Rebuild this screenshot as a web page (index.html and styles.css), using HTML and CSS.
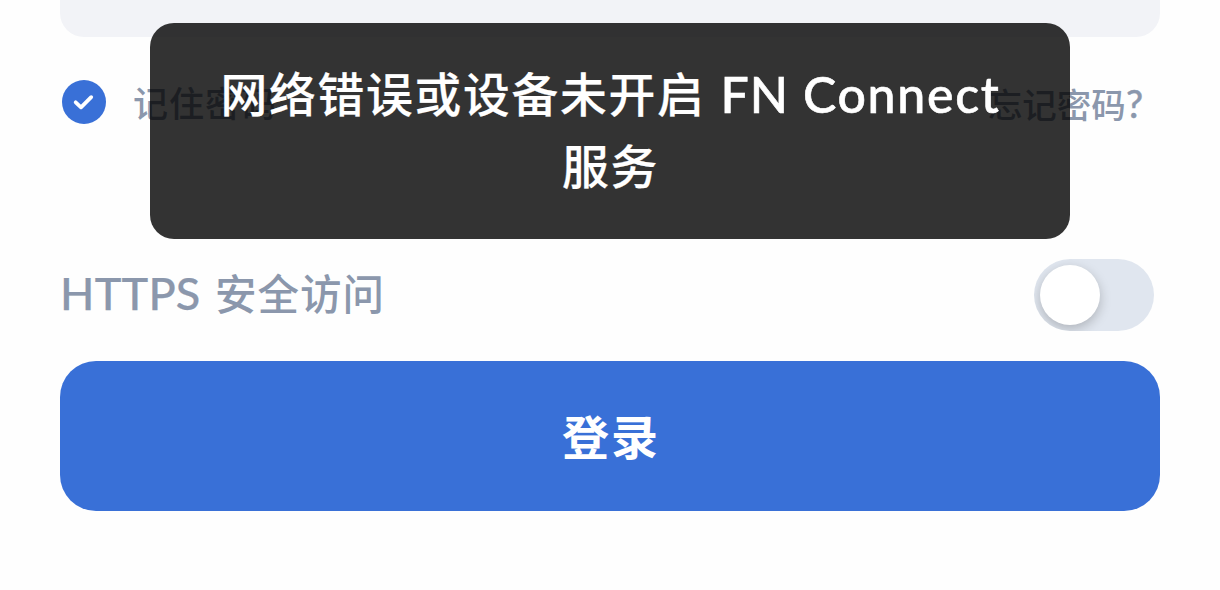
FILE: index.html
```html
<!DOCTYPE html>
<html lang="zh-CN">
<head>
<meta charset="utf-8">
<title>登录</title>
<link rel="stylesheet" href="styles.css">
</head>
<body>
<main class="login">
  <div class="field"></div>
  <div class="options">
    <label class="remember">
      <svg class="check" viewBox="0 0 44 44"><circle cx="22" cy="22" r="22"/><path d="M13.7 22.3 19 27.3 29.2 17.2"/></svg>
      <span class="remember-text">记住密码</span>
    </label>
    <a class="forgot">忘记密码<span class="mark">?</span></a>
  </div>
  <div class="https">
    <span class="https-text"><span class="latin">HTTPS</span><span class="https-cjk">安全访问</span></span>
    <span class="switch"><span class="knob"></span></span>
  </div>
  <button class="submit">登录</button>
</main>
<div class="toast">
  <div class="toast-line">网络错误或设备未开启<span class="toast-fn">FN</span><span class="toast-connect">Connect</span></div>
  <div class="toast-line">服务</div>
</div>
</body>
</html>
```
FILE: styles.css
```css
* { box-sizing: border-box; }
body {
  margin: 0;
  height: 590px;
  overflow: hidden;
  background: #fefefe;
  font-family: "Noto Sans CJK SC", "Noto Sans", sans-serif;
  font-weight: 500;
}
.login { padding: 0 60px; }
.field {
  height: 37px;
  background: #f2f3f7;
  border-radius: 0 0 24px 24px;
}
.options {
  display: flex;
  justify-content: space-between;
  align-items: center;
  height: 130px;
  padding: 0 17px 0 2px;
  color: #8b97ac;
}
.remember { display: flex; align-items: center; gap: 27px; }
.check { width: 44px; height: 44px; fill: #3970d7; }
.check path { fill: none; stroke: #fff; stroke-width: 3.8; stroke-linecap: round; stroke-linejoin: round; }
.remember-text { font-size: 35px; line-height: 48px; letter-spacing: 1px; }
.forgot { font-size: 34.5px; line-height: 50px; padding-top: 1px; }
.mark { font-family: Lato, sans-serif; font-size: 38px; line-height: 1; -webkit-text-stroke: .4px #8b97ac; }
.https {
  display: flex;
  justify-content: space-between;
  align-items: center;
  height: 72px;
  margin-top: 92px;
  padding-right: 6px;
  color: #8b97ac;
}
.https-text { display: flex; align-items: baseline; font-size: 41.5px; line-height: 60px; padding-bottom: 5px; }
.latin { font-family: Lato, sans-serif; font-size: 45px; width: 155px; letter-spacing: .2px; -webkit-text-stroke: .25px #8b97ac; }
.https-cjk { letter-spacing: 1px; }
.switch {
  width: 120px;
  height: 72px;
  padding: 6px;
  border-radius: 36px;
  background: #e0e6ef;
  overflow: hidden;
}
.knob {
  display: block;
  width: 60px;
  height: 60px;
  border-radius: 50%;
  background: #fff;
  box-shadow: 0 4px 12px rgba(0, 0, 0, .22);
}
.submit {
  display: block;
  width: 100%;
  height: 150px;
  margin-top: 30px;
  padding: 0 0 2px 2px;
  border: 0;
  border-radius: 36px;
  background: #3970d7;
  color: #fff;
  font: 700 47px/70px "Noto Sans CJK SC", sans-serif;
  letter-spacing: 2px;
}
.toast {
  position: absolute;
  left: 150px;
  top: 23px;
  width: 920px;
  height: 216px;
  padding: 33px 0 0 1px;
  border-radius: 24px;
  background: rgba(0, 0, 0, .8);
  color: #fff;
  font-size: 46.8px;
  line-height: 72px;
  letter-spacing: 1.7px;
  text-align: center;
  white-space: nowrap;
  -webkit-text-stroke: .2px #fff;
}
.toast-fn, .toast-connect { position: relative; top: 1px; font-family: Lato, sans-serif; font-size: 50px; line-height: 1; -webkit-text-stroke: .6px #fff; }
.toast-fn { margin-left: 15px; letter-spacing: 1px; }
.toast-connect { margin-left: 14px; letter-spacing: 1.7px; }
```
